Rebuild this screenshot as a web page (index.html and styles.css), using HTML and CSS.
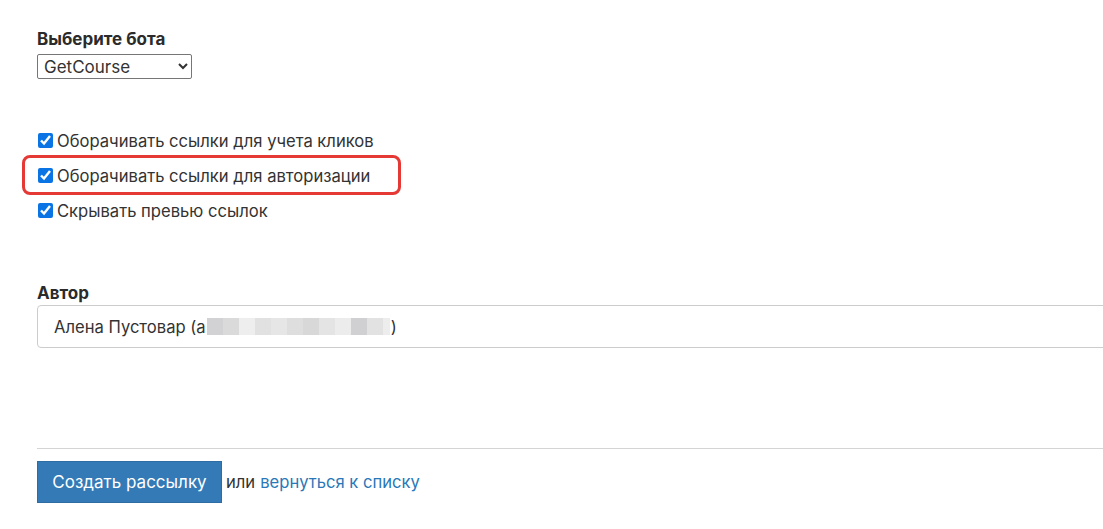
FILE: index.html
```html
<!DOCTYPE html>
<html lang="ru">
<head>
<meta charset="utf-8">
<title>Рассылка</title>
<link rel="stylesheet" href="styles.css">
</head>
<body>
<div class="page">
  <div class="field field-bot">
    <label class="field-label" for="bot">Выберите бота</label>
    <select id="bot" class="bot-select">
      <option>GetCourse</option>
    </select>
  </div>

  <div class="checks">
    <label class="check-row"><input type="checkbox" checked><span>Оборачивать ссылки для учета кликов</span></label>
    <label class="check-row highlighted"><input type="checkbox" checked><span>Оборачивать ссылки для авторизации</span><span class="highlight-box"></span></label>
    <label class="check-row"><input type="checkbox" checked><span>Скрывать превью ссылок</span></label>
  </div>

  <div class="field field-author">
    <label class="field-label">Автор</label>
    <div class="author-input">Алена Пустовар (a<span class="blur"><i class="b1"></i><i class="b2"></i><i class="b3"></i><i class="b4"></i><i class="b5"></i><i class="b6"></i><i class="b7"></i><i class="b8"></i><i class="b9"></i><i class="b10"></i><i class="b11"></i><i class="b12"></i></span>)</div>
  </div>

  <hr class="divider">

  <div class="actions">
    <button class="btn-primary" type="button">Создать рассылку</button>
    <span class="or">или</span>
    <a class="back-link" href="#">вернуться к списку</a>
  </div>
</div>
</body>
</html>
```

FILE: styles.css
```css
html, body {
  margin: 0;
  padding: 0;
  background: #fff;
  overflow: hidden;
}
body {
  font-family: Inter, "Noto Sans", "Liberation Sans", sans-serif;
  color: #333;
  font-size: 16.6px;
}
.page {
  padding-left: 37px;
  padding-top: 29px;
}
.field-label {
  display: block;
  font-weight: 700;
  font-size: 17px;
  line-height: 20px;
  color: #2b2b2b;
}
.bot-select {
  display: block;
  margin-top: 5px;
  width: 155px;
  height: 25px;
  font-family: inherit;
  font-size: 17px;
  color: #333;
  border: 1px solid #767676;
  border-radius: 2px;
  background: #fff;
  padding: 0 2px;
}
.checks {
  margin-top: 44px;
}
.check-row {
  position: relative;
  display: flex;
  align-items: center;
  height: 35px;
  font-size: 16.6px;
}
.check-row input {
  margin: 0 4px 0 1px;
  width: 15px;
  height: 15px;
  accent-color: #0b74e5;
}
.highlight-box {
  position: absolute;
  left: -15px;
  top: -3px;
  width: 373px;
  height: 34px;
  border: 3px solid #e53935;
  border-radius: 8px;
}
.field-author {
  margin-top: 55px;
}
.author-input {
  margin-top: 2px;
  width: calc(100% + 20px);
  box-sizing: border-box;
  height: 43px;
  border: 1px solid #ccc;
  border-radius: 4px;
  padding-left: 16px;
  display: flex;
  align-items: center;
  font-size: 16.6px;
  color: #333;
}
.blur {
  display: inline-flex;
  height: 17px;
  margin: 0 1px;
}
.blur i {
  display: block;
  width: 16px;
  height: 17px;
  background: #dcdcdc;
}
.blur .b1 { background: #d2d2d4; }
.blur .b2 { background: #dadada; }
.blur .b3 { background: #eeeeee; }
.blur .b4 { background: #e1e1e1; }
.blur .b5 { background: #e6e6e6; }
.blur .b6 { background: #dedede; }
.blur .b7 { background: #d8d8d8; }
.blur .b8 { background: #e4e4e4; }
.blur .b9 { background: #ececec; }
.blur .b10 { background: #d0d0d3; }
.blur .b11 { background: #e2e2e2; }
.blur .b12 { background: #ededed; width: 7px; }
.divider {
  margin: 100px 0 0 0;
  border: 0;
  border-top: 1px solid #d4d4d4;
  width: calc(100% + 20px);
}
.actions {
  margin-top: 12px;
  display: flex;
  align-items: center;
}
.btn-primary {
  height: 42px;
  width: 185px;
  padding: 0;
  background: #337ab7;
  border: 1px solid #2e6da4;
  color: #fff;
  font-family: inherit;
  font-size: 17px;
  border-radius: 0;
}
.or {
  margin-left: 4px;
  color: #333;
}
.back-link {
  margin-left: 5px;
  color: #2a78b7;
  text-decoration: none;
}
```
